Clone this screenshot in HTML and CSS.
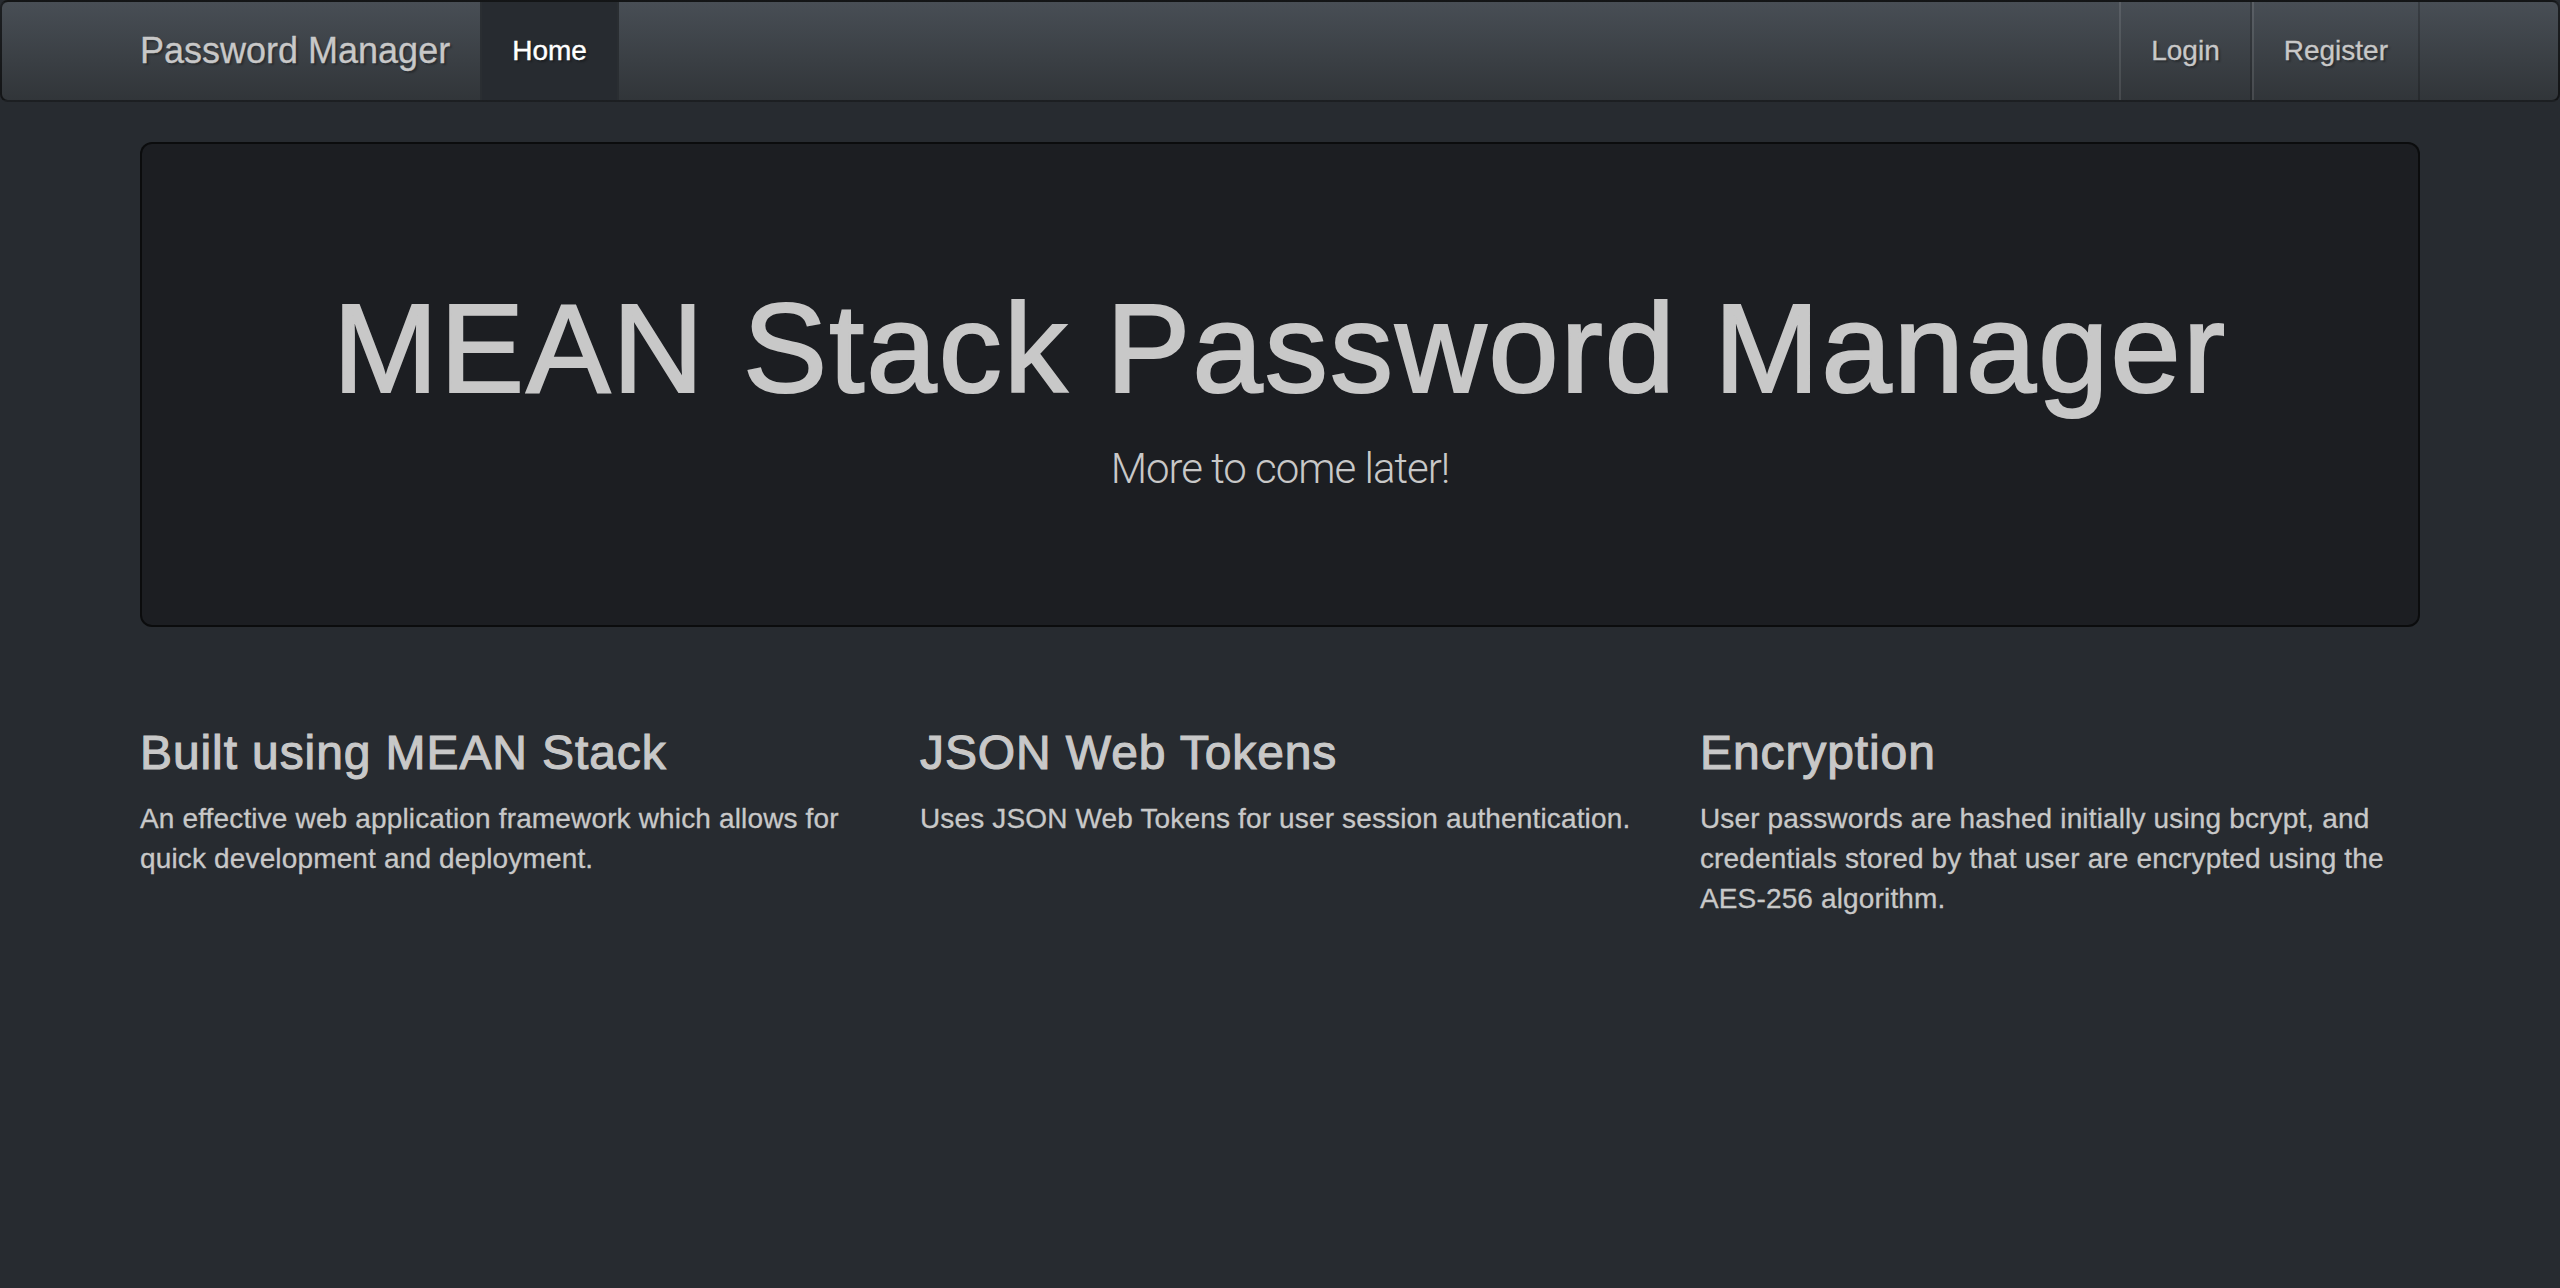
FILE: index.html
```html
<!DOCTYPE html>
<html lang="en">
<head>
<meta charset="utf-8">
<title>Password Manager</title>
<link rel="stylesheet" href="styles.css">
</head>
<body>
<nav class="navbar">
  <div class="container navbar-inner">
    <a class="brand" href="#">Password Manager</a>
    <ul class="nav">
      <li class="active"><a href="#">Home</a></li>
    </ul>
    <ul class="nav nav-right">
      <li><a href="#">Login</a></li>
      <li><a href="#">Register</a></li>
    </ul>
  </div>
</nav>
<main class="container">
  <section class="jumbotron">
    <h1>MEAN Stack Password Manager</h1>
    <p>More to come later!</p>
  </section>
  <div class="row">
    <div class="col">
      <h3>Built using MEAN Stack</h3>
      <p>An effective web application framework which allows for quick development and deployment.</p>
    </div>
    <div class="col">
      <h3>JSON Web Tokens</h3>
      <p>Uses JSON Web Tokens for user session authentication.</p>
    </div>
    <div class="col">
      <h3>Encryption</h3>
      <p>User passwords are hashed initially using bcrypt, and credentials stored by that user are encrypted using the AES-256 algorithm.</p>
    </div>
  </div>
</main>
</body>
</html>
```
FILE: styles.css
```css
* { box-sizing: border-box; }
html, body { margin: 0; padding: 0; }
body {
  background: #272b30;
  color: #c8c8c8;
  font-family: "Liberation Sans", Arial, sans-serif;
  font-size: 28px;
  line-height: 40px;
  -webkit-text-stroke: 0.3px #c8c8c8;
}
a { text-decoration: none; }
.container {
  width: 2340px;
  margin: 0 auto;
  padding: 0 30px;
}
.navbar {
  height: 102px;
  margin-bottom: 40px;
  border: 2px solid rgba(0,0,0,0.6);
  border-radius: 8px;
  background-color: #3a3f44;
  background-image: linear-gradient(#484e55, #3a3f44 60%, #313539);
}
.navbar-inner {
  display: flex;
  height: 98px;
}
.brand {
  display: block;
  height: 98px;
  padding: 29px 30px;
  margin-left: -30px;
  font-size: 36px;
  line-height: 40px;
  color: #c8c8c8;
  text-shadow: 2px 2px 2px rgba(0,0,0,0.3);
}
.nav {
  display: flex;
  list-style: none;
  margin: 0;
  padding: 0;
}
.nav-right { margin-left: auto; }
.nav li a {
  display: block;
  height: 98px;
  padding: 29px 30px;
  font-size: 28px;
  line-height: 40px;
  color: #c8c8c8;
  text-shadow: 2px 2px 2px rgba(0,0,0,0.3);
  border-left: 2px solid rgba(255,255,255,0.1);
  border-right: 2px solid rgba(0,0,0,0.2);
}
.nav li.active a {
  color: #fff;
  -webkit-text-stroke: 0.4px #fff;
  background: #272b30;
  border-color: #2a2e32;
}
.jumbotron {
  background: #1c1e22;
  border: 2px solid rgba(0,0,0,0.6);
  border-radius: 12px;
  padding: 96px 120px;
  margin-bottom: 60px;
  text-align: center;
}
.jumbotron h1 {
  margin: 40px 0 20px;
  font-size: 126px;
  line-height: 1.1;
  font-weight: 400;
  letter-spacing: 2.2px;
  -webkit-text-stroke: 2.2px #c8c8c8;
  color: #c8c8c8;
}
.jumbotron p {
  margin: 0 0 30px;
  font-family: Roboto, "Liberation Sans", sans-serif;
  font-size: 42px;
  line-height: 60px;
  font-weight: 300;
  letter-spacing: -1px;
  -webkit-text-stroke: 0;
}
.row {
  display: flex;
  margin: 0 -30px;
}
.col {
  width: 33.3333%;
  padding: 0 30px;
}
.col h3 {
  margin: 40px 0 20px;
  font-size: 48px;
  line-height: 1.1;
  font-weight: 400;
  letter-spacing: 0.9px;
  -webkit-text-stroke: 1.1px #c8c8c8;
  color: #c8c8c8;
}
.col p { margin: 0 0 20px; letter-spacing: 0.15px; }
```
